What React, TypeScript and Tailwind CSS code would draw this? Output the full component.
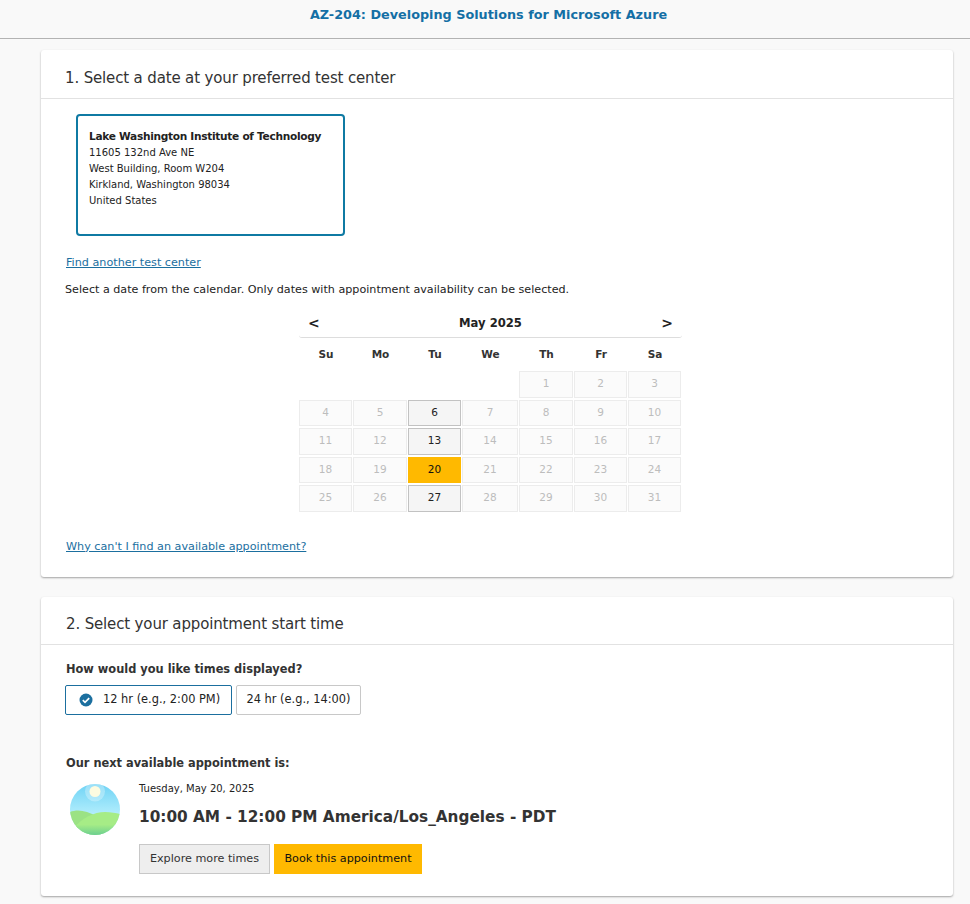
const weekDays = ["Su", "Mo", "Tu", "We", "Th", "Fr", "Sa"]

const days: (number | null)[] = [
  null, null, null, null, 1, 2, 3,
  4, 5, 6, 7, 8, 9, 10,
  11, 12, 13, 14, 15, 16, 17,
  18, 19, 20, 21, 22, 23, 24,
  25, 26, 27, 28, 29, 30, 31,
]

const available = [6, 13, 27]

function dayClass(day: number) {
  if (day === 20) return "bg-[#ffb900] text-[#111] border-[#ffb900]"
  if (available.includes(day)) return "bg-[#f5f5f5] text-[#222] border-[#c2c2c2]"
  return "bg-[#fbfbfb] text-[#bdbdbd] border-[#ececec]"
}

function Calendar() {
  return (
    <div className="ml-[258px] mt-[11px] w-[383px]">
      <div className="flex h-[29px] items-center justify-between rounded-b-[3px] border-b border-[#ddd] pl-[9px] pr-[9px] font-bold text-[#222]">
        <span className="text-[14px]">&lt;</span>
        <span className="pt-[2px] text-[11.6px]">May 2025</span>
        <span className="text-[14px]">&gt;</span>
      </div>
      <div className="grid grid-cols-[54px_55px_54px_57px_55px_54px_54px]">
        {weekDays.map((d) => (
          <div key={d} className="flex h-[33px] items-center justify-center text-[10.5px] font-bold text-[#333]">
            {d}
          </div>
        ))}
      </div>
      <div className="grid grid-cols-[54px_55px_54px_57px_55px_54px_54px] gap-y-[2px]">
        {days.map((day, i) =>
          day === null ? (
            <div key={i} />
          ) : (
            <div
              key={i}
              className={"mr-[1px] flex h-[26.5px] items-center justify-center border text-[10.5px] " + dayClass(day)}
            >
              {day}
            </div>
          )
        )}
      </div>
    </div>
  )
}

function CheckCircle() {
  return (
    <svg width="14" height="14" viewBox="0 0 14 14" className="shrink-0">
      <circle cx="7" cy="7" r="6.5" fill="#1b6f9f" />
      <path d="M3.8 7.2 6 9.3l4.2-4.2" fill="none" stroke="#fff" strokeWidth="1.7" />
    </svg>
  )
}

function Landscape() {
  return (
    <svg width="50" height="51" viewBox="0 0 50 51" className="shrink-0">
      <defs>
        <linearGradient id="sky" x1="0" y1="0" x2="0" y2="1">
          <stop offset="0" stopColor="#6fd3f5" />
          <stop offset="0.65" stopColor="#b8f0fd" />
        </linearGradient>
        <linearGradient id="hill" x1="0" y1="0" x2="0" y2="1">
          <stop offset="0.55" stopColor="#a6ec86" />
          <stop offset="1" stopColor="#6ccf90" />
        </linearGradient>
        <clipPath id="disc">
          <ellipse cx="25" cy="25.5" rx="25" ry="25.5" />
        </clipPath>
      </defs>
      <g clipPath="url(#disc)">
        <rect width="50" height="51" fill="url(#sky)" />
        <circle cx="25" cy="7.5" r="10" fill="#ffffff" opacity="0.3" />
        <circle cx="25" cy="7.5" r="5.5" fill="#fdfbe0" />
        <path d="M0 28c5-2 11-2 17 0 6 2 12 5 18 8v15H0z" fill="#9be284" />
        <path d="M4 44c8-10 20-16 31-16 6 0 11 1 15 2v21H4z" fill="url(#hill)" />
      </g>
    </svg>
  )
}

export default function App() {
  return (
    <div className="min-h-[904px] bg-[#f9f9f9] font-['DejaVu_Sans',sans-serif] text-[11.2px] text-[#222]">
      {/* Header */}
      <header className="flex h-[39px] items-center justify-center border-b border-[#b3b3b3] pb-[9px] pl-[7px]">
        <h1 className="text-[12.8px] font-bold text-[#146fa5]">AZ-204: Developing Solutions for Microsoft Azure</h1>
      </header>

      <div className="flex flex-col gap-[20px] pt-[11px] pr-[17px] pl-[41px]">
        {/* Step 1 */}
        <section className="h-[527px] rounded-[3px] bg-white shadow-[0_1px_2px_rgba(0,0,0,0.35)]">
          <h2 className="flex h-[49px] items-center border-b border-[#e2e2e2] pt-[8px] pl-[24px] text-[15px] tracking-[-0.15px] text-[#333]">
            1. Select a date at your preferred test center
          </h2>
          <div className="ml-[35px] mt-[15px] h-[122px] w-[269px] rounded-[4px] border-2 border-[#0f7aa3] px-[11px] pt-[12px] text-[10px] leading-[16px]">
            <p className="mb-[1px] whitespace-nowrap text-[10.6px] font-bold tracking-[-0.3px]">Lake Washington Institute of Technology</p>
            <p>11605 132nd Ave NE</p>
            <p>West Building, Room W204</p>
            <p>Kirkland, Washington 98034</p>
            <p>United States</p>
          </div>
          <a className="ml-[25px] mt-[19px] block leading-[16px] text-[#1b6f9f] underline">Find another test center</a>
          <p className="ml-[24px] mt-[11px] text-[11.15px] leading-[16px]">
            Select a date from the calendar. Only dates with appointment availability can be selected.
          </p>
          <Calendar />
          <a className="ml-[25px] mt-[27px] block leading-[16px] text-[#1b6f9f] underline">
            Why can't I find an available appointment?
          </a>
        </section>

        {/* Step 2 */}
        <section className="h-[299px] rounded-[3px] bg-white shadow-[0_1px_2px_rgba(0,0,0,0.35)]">
          <h2 className="flex h-[48px] items-center border-b border-[#e2e2e2] pt-[7px] pl-[25px] text-[15px] tracking-[-0.15px] text-[#333]">
            2. Select your appointment start time
          </h2>
          <div className="pl-[25px]">
            <p className="mt-[16px] text-[11.4px] font-bold leading-[16px] text-[#333]">How would you like times displayed?</p>
            <div className="-ml-px mt-[8px] flex gap-[4px] text-[11.4px]">
              <button className="flex h-[30px] w-[167px] items-center gap-[10px] rounded-[2px] border border-[#1b6f9f] pl-[13px]">
                <CheckCircle />
                12 hr (e.g., 2:00 PM)
              </button>
              <button className="h-[30px] w-[125px] rounded-[2px] border border-[#c8c8c8]">24 hr (e.g., 14:00)</button>
            </div>
            <p className="mt-[40px] text-[11.4px] font-bold leading-[16px] text-[#333]">Our next available appointment is:</p>
            <div className="mt-[11px] flex">
              <div className="ml-[4px] mt-[2px] w-[69px]">
                <Landscape />
              </div>
              <div>
                <p className="text-[10px] leading-[14px]">Tuesday, May 20, 2025</p>
                <p className="mt-[10px] text-[15.3px] font-bold leading-[22px] text-[#333]">
                  10:00 AM - 12:00 PM America/Los_Angeles - PDT
                </p>
                <div className="mt-[16px] flex gap-[4px]">
                  <button className="h-[30px] w-[131px] border border-[#c8c8c8] bg-[#eee] pt-[1px] text-[#333]">Explore more times</button>
                  <button className="h-[30px] w-[148px] bg-[#ffb900] pt-[1px] text-[#111]">Book this appointment</button>
                </div>
              </div>
            </div>
          </div>
        </section>
      </div>
    </div>
  )
}
